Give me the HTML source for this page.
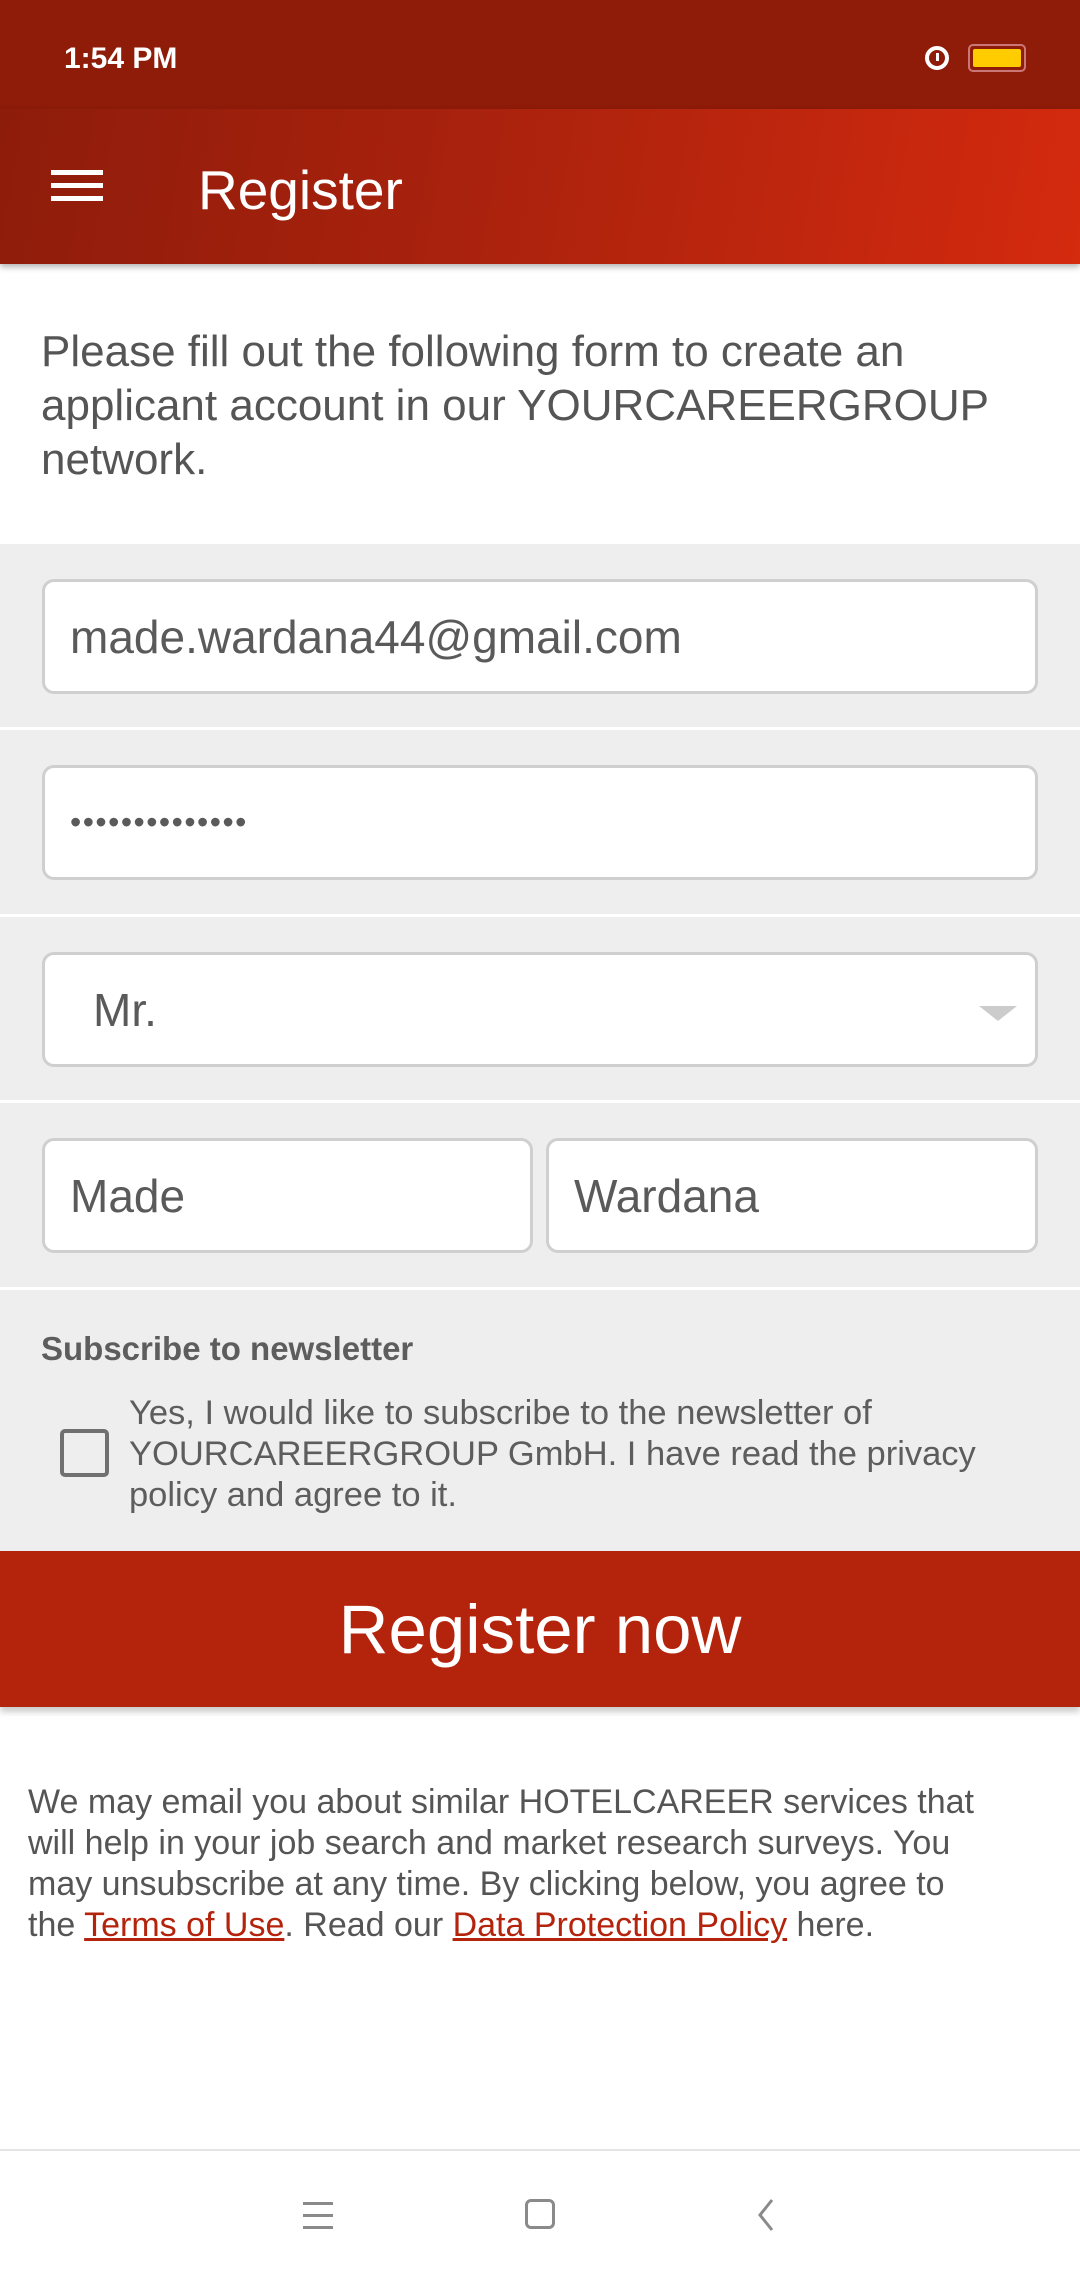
<!DOCTYPE html>
<html><head><meta charset="utf-8"><style>
*{margin:0;padding:0;box-sizing:border-box}
body{width:1080px;height:2280px;overflow:hidden;background:#fff;font-family:"Liberation Sans",Roboto,sans-serif;position:relative}
.abs{position:absolute}
.status{left:0;top:0;width:1080px;height:109px;background:#8f1b09}
.bar{left:0;top:109px;width:1080px;height:155px;background:linear-gradient(100deg,#8e1c0b 0%,#aa220d 45%,#d42a0e 100%);box-shadow:0 3px 6px rgba(0,0,0,.3)}
.grey{left:0;top:544px;width:1080px;height:1007px;background:#eeeeee}
.sep{left:0;width:1080px;height:3px;background:#fff}
.field{background:#fff;border:3px solid #cfcfcf;border-radius:12px;color:#5a5a5a;font-size:46px;padding-left:25px;display:flex;align-items:center}
.btn{left:0;top:1551px;width:1080px;height:156px;background:#b4240d;color:#fff;font-size:69px;display:flex;align-items:center;justify-content:center;box-shadow:0 5px 6px rgba(0,0,0,.2)}
</style></head><body>
<div class="abs status"></div>
<div class="abs" style="left:64px;top:42px;color:#fff;font-size:30px;font-weight:bold">1:54 PM</div>
<div class="abs" style="left:925px;top:46px;width:24px;height:24px;border-radius:50%;border:4px solid #fff"><div style="position:absolute;left:7px;top:3px;width:3px;height:8px;background:#fff"></div></div>
<div class="abs" style="left:968px;top:44px;width:58px;height:28px;border:2px solid #c77;border-radius:5px;padding:3px"><div style="width:100%;height:100%;background:#ffcc00;border-radius:2px"></div></div>
<div class="abs bar"></div>
<div class="abs" style="left:51px;top:170px;width:52px;height:5px;background:#fff;box-shadow:0 13px 0 #fff,0 26px 0 #fff"></div>
<div class="abs" style="left:198px;top:158px;color:#fff;font-size:55px">Register</div>
<div class="abs" style="left:41px;top:325px;color:#555;font-size:44px;line-height:54px;width:1010px">Please fill out the following form to create an applicant account in our YOURCAREERGROUP network.</div>
<div class="abs grey"></div>
<div class="abs sep" style="top:727px"></div>
<div class="abs sep" style="top:914px"></div>
<div class="abs sep" style="top:1100px"></div>
<div class="abs sep" style="top:1287px"></div>
<div class="abs field" style="left:42px;top:579px;width:996px;height:115px">made.wardana44@gmail.com</div>
<div class="abs field" style="left:42px;top:765px;width:996px;height:115px;font-size:32px;letter-spacing:1.5px">••••••••••••••</div>
<div class="abs field" style="left:42px;top:952px;width:996px;height:115px;padding-left:48px">Mr.</div>
<div class="abs" style="left:979px;top:1006px;width:0;height:0;border-left:19px solid transparent;border-right:19px solid transparent;border-top:15px solid #ccc"></div>
<div class="abs field" style="left:42px;top:1138px;width:491px;height:115px">Made</div>
<div class="abs field" style="left:546px;top:1138px;width:492px;height:115px">Wardana</div>
<div class="abs" style="left:41px;top:1330px;color:#5d5d5d;font-size:33px;font-weight:bold">Subscribe to newsletter</div>
<div class="abs" style="left:60px;top:1429px;width:49px;height:48px;border:4px solid #707070;border-radius:5px"></div>
<div class="abs" style="left:129px;top:1393px;width:900px;color:#5d5d5d;font-size:34.5px;line-height:41px">Yes, I would like to subscribe to the newsletter of YOURCAREERGROUP GmbH. I have read the privacy policy and agree to it.</div>
<div class="abs btn">Register now</div>
<div class="abs" style="left:28px;top:1782px;width:960px;color:#555;font-size:34px;line-height:41px">We may email you about similar HOTELCAREER services that will help in your job search and market research surveys. You may unsubscribe at any time. By clicking below, you agree to the <span style="color:#b4240d;text-decoration:underline">Terms of Use</span>. Read our <span style="color:#b4240d;text-decoration:underline">Data Protection Policy</span> here.</div>
<div class="abs" style="left:0;top:2149px;width:1080px;height:2px;background:#e4e4e4"></div>
<div class="abs" style="left:303px;top:2202px;width:30px;height:3px;background:#8a8a8a;box-shadow:0 12px 0 #8a8a8a,0 24px 0 #8a8a8a"></div>
<div class="abs" style="left:525px;top:2199px;width:30px;height:30px;border:3px solid #8a8a8a;border-radius:6px"></div>
<svg class="abs" style="left:752px;top:2198px" width="24" height="34"><path d="M20 2 L8 17 L20 32" stroke="#8a8a8a" stroke-width="3" fill="none"/></svg>
</body></html>
